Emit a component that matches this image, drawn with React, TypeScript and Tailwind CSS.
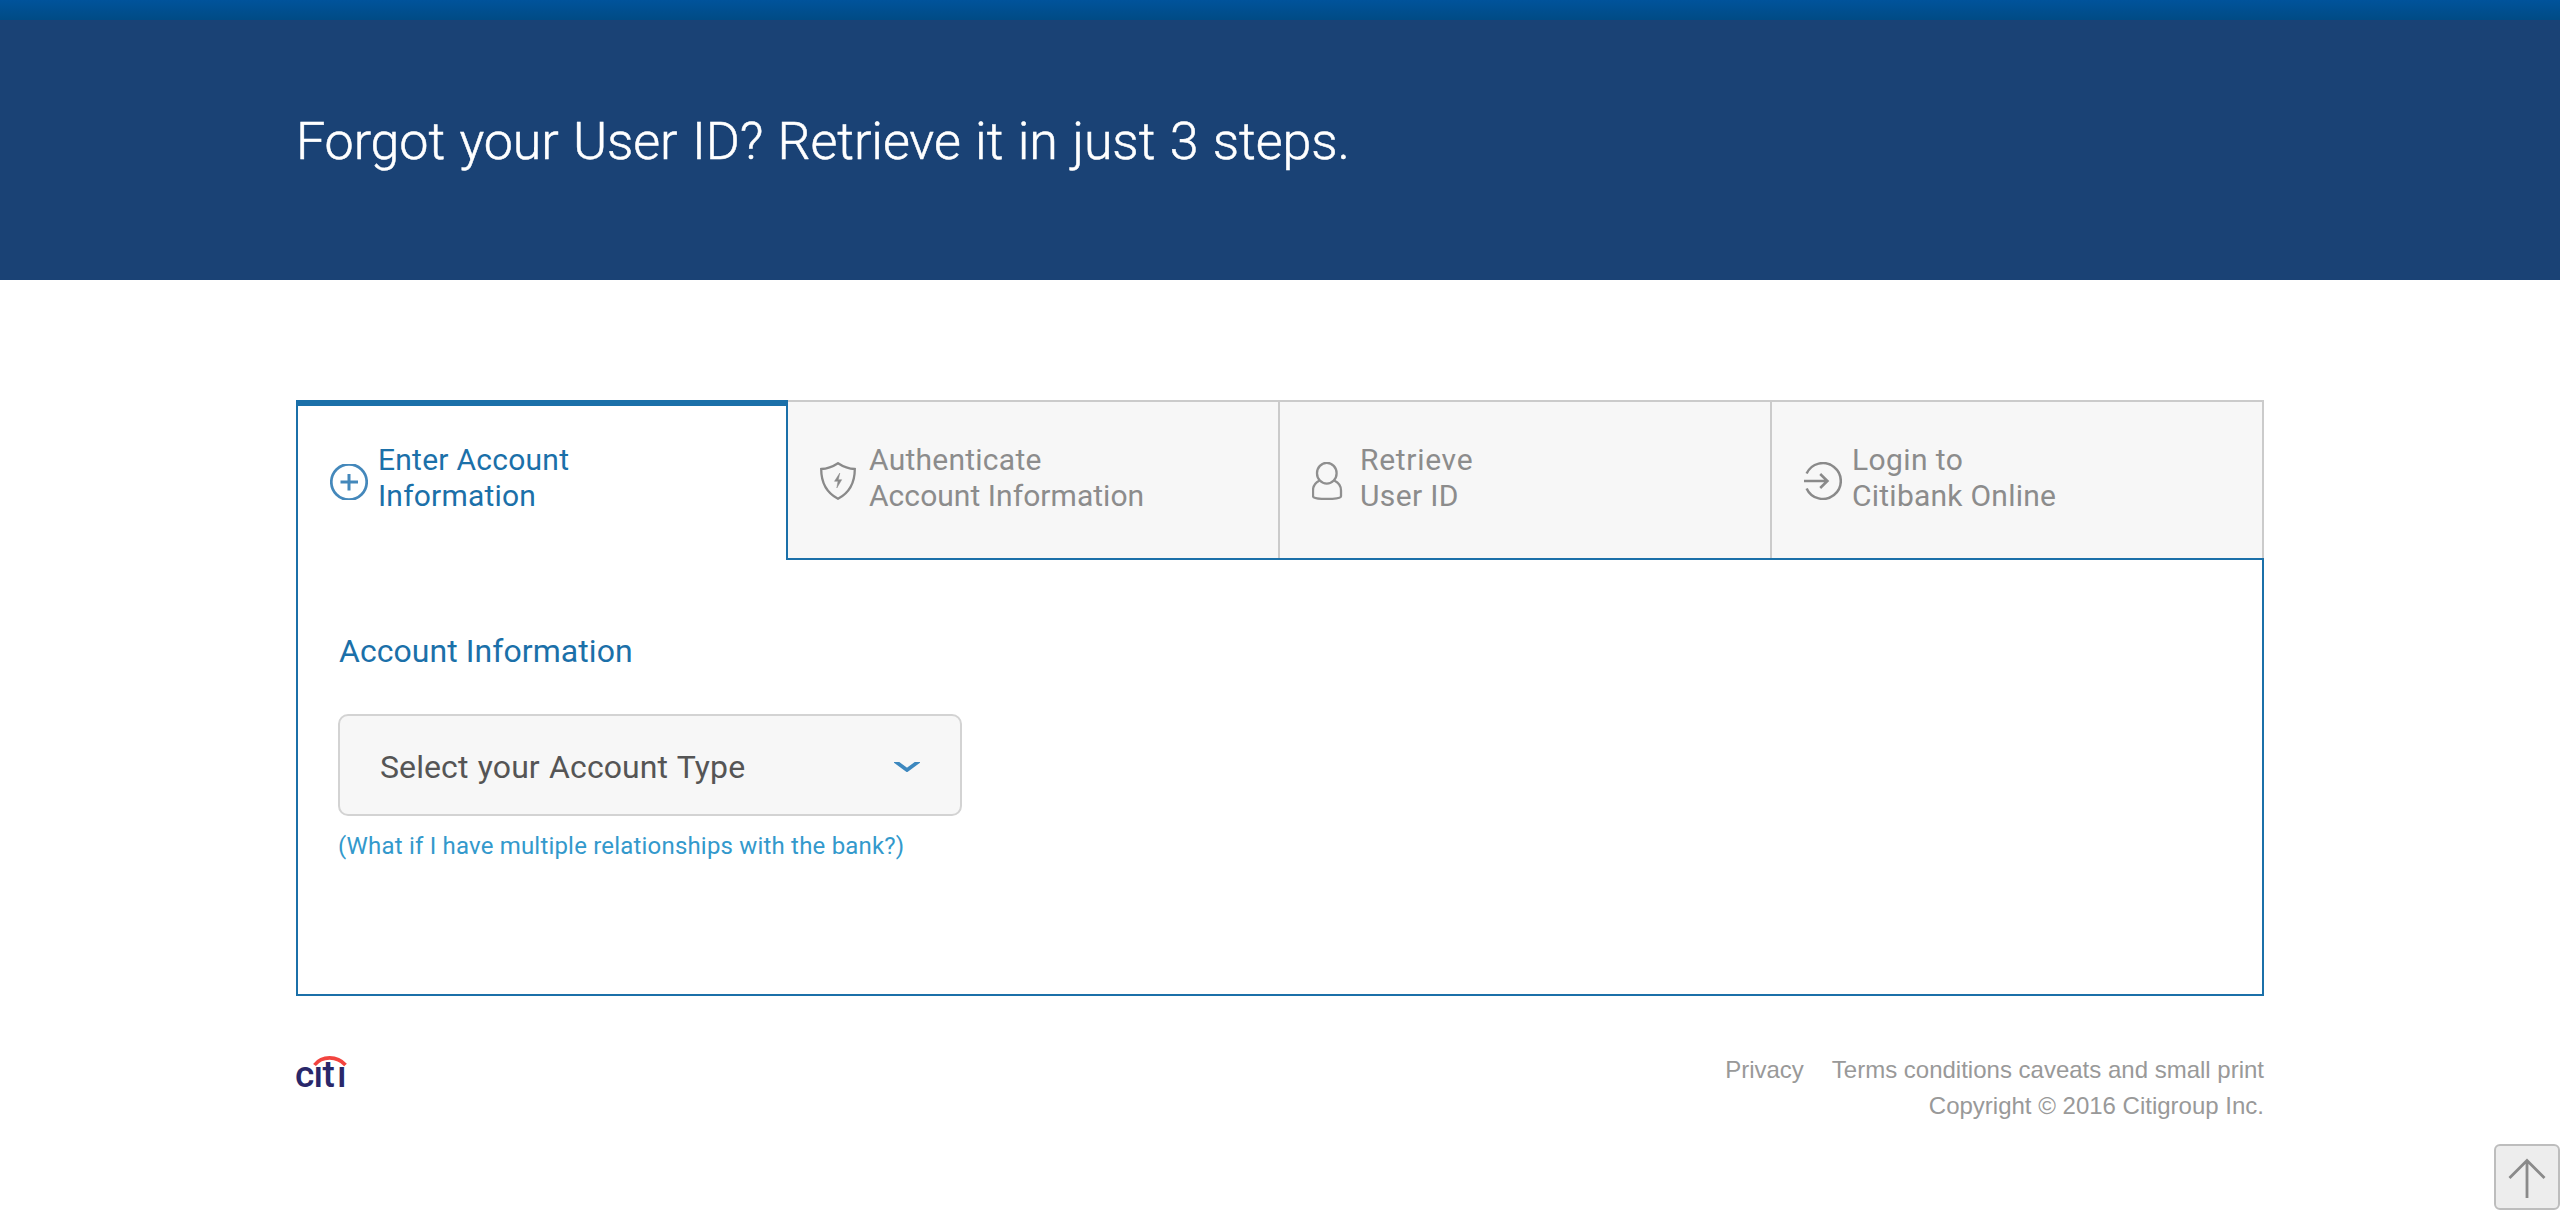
import type { ReactNode } from 'react';

function PlusIcon() {
  return (
    <svg className="mt-[22px] h-9 w-[38px] shrink-0" viewBox="0 0 38 36" fill="none" stroke="#4488bb">
      <circle cx="19" cy="18" r="17.7" strokeWidth="2.700" />
      <path d="M10.5 18h17.5M19 10v16.5" strokeWidth="3" />
    </svg>
  );
}

function ShieldIcon() {
  return (
    <svg className="mt-5 h-[38px] w-[38px] shrink-0" viewBox="0 0 38 38" fill="none" stroke="#8a8a8a">
      <path d="M1.2 7C7 6.800 13 4.500 18 1.200C23 4.500 29 6.800 34.800 7C34.800 21 29 31 18 36.800C7 31 1.200 21 1.200 7Z" strokeWidth="2.300" />
      <path d="M19.800 11L14.500 19.300H18L16.800 26L21.700 17.700H18.300Z" fill="#8a8a8a" strokeWidth="0.5" />
    </svg>
  );
}

function UserIcon() {
  return (
    <svg className="mt-5 h-[38px] w-[38px] shrink-0" viewBox="0 0 38 38" fill="none" stroke="#8f8f8f" strokeWidth="2.300">
      <ellipse cx="14.800" cy="11.200" rx="9.800" ry="10.400" />
      <path d="M7.500 18.500C3.500 20.500 1 24 1 28.500V34.200C1 36 7 37 15 37S29 36 29 34.200V28.500C29 24 26.500 20.500 22.200 18.500" />
    </svg>
  );
}

function LoginIcon() {
  return (
    <svg className="mt-5 h-[38px] w-[38px] shrink-0" viewBox="0 0 38 38" fill="none" stroke="#8a8a8a" strokeWidth="2.500">
      <path d="M2.600 11.600A17.900 17.900 0 1 1 2.600 26.400" />
      <path d="M0 19H23.500M16.200 12L23.400 19L16.200 26" strokeWidth="2.600" />
    </svg>
  );
}

function Tab({ icon, children }: { icon: ReactNode; children: ReactNode }) {
  return (
    <div className="flex h-[158px] flex-1 items-start gap-2.5 border-t-2 border-r-2 border-[#cbcbcb] bg-[#f7f7f7] pt-10 pl-8 text-[30px] leading-9 text-[#8c8c8c]">
      {icon}
      <div className="whitespace-nowrap">{children}</div>
    </div>
  );
}

export default function App() {
  return (
    <div className="h-[1210px] w-full overflow-hidden bg-white font-['Roboto',sans-serif]">
      <div className="h-5 bg-linear-to-b from-[#00539b] to-[#004b85]" />
      <header className="h-[260px] bg-[#1a4275]">
        <div className="mx-auto w-[1968px] pt-[90px]">
          <h1 className="text-[52px] leading-[64px] font-light tracking-[-0.1px] [word-spacing:1.8px] whitespace-nowrap text-white [-webkit-text-stroke:0.5px_white]">
            Forgot your User ID? Retrieve it in just 3 steps.
          </h1>
        </div>
      </header>

      <main className="mx-auto w-[1968px] pt-[120px]">
        <div className="flex items-start">
          <div className="flex h-40 w-[492px] items-start gap-2.5 border-x-2 border-t-6 border-[#1b70a9] pt-9 pl-8 text-[30px] leading-9 text-[#1b70a9]">
            <PlusIcon />
            <div className="whitespace-nowrap">
              <p className="tracking-[0.25px]">Enter Account</p>
              <p className="tracking-[0.2px]">Information</p>
            </div>
          </div>
          <div className="flex flex-1 border-b-2 border-[#1b70a9]">
            <Tab icon={<ShieldIcon />}>
              <p className="pl-px tracking-[0.25px]">Authenticate</p>
              <p className="pl-px tracking-[0.05px]">Account Information</p>
            </Tab>
            <Tab icon={<UserIcon />}>
              <p className="tracking-[0.7px]">Retrieve</p>
              <p className="tracking-[0.35px]">User ID</p>
            </Tab>
            <Tab icon={<LoginIcon />}>
              <p className="tracking-[0.4px]">Login to</p>
              <p className="tracking-[0.24px]">Citibank Online</p>
            </Tab>
          </div>
        </div>

        <section className="flex h-[436px] flex-col items-start border-x-2 border-b-2 border-[#1b70a9] pt-[71px] pl-10">
          <h2 className="pl-px text-[32px] leading-10 tracking-[0.06px] text-[#1b70a9]">Account Information</h2>
          <button className="mt-[43px] flex h-[102px] w-[624px] items-center justify-between rounded-[10px] border-2 border-[#d3d3d3] bg-[#f7f7f7] pr-10 pl-10 text-[32px] tracking-[0.1px] [word-spacing:1.2px] text-[#555]">
            <span className="pt-[3px] leading-10">Select your Account Type</span>
            <svg className="mt-1 h-2.5 w-[26px]" viewBox="0 0 26 10" fill="none">
              <path d="M0 -1.500L13 8L26 -1.500" stroke="#3d88bf" strokeWidth="3.800" />
            </svg>
          </button>
          <a className="mt-3.5 text-2xl leading-8 tracking-[0.19px] text-[#3399cc]">
            (What if I have multiple relationships with the bank?)
          </a>
        </section>
      </main>

      <footer className="mx-auto flex w-[1968px] items-start justify-between pt-14">
        <svg className="mt-1 h-8 w-[50px] overflow-visible" viewBox="0 0 50 32" aria-label="citi">
          <text x="-1 17.500 26.500 41" y="31" fill="#29276a" fontFamily="Roboto" fontWeight="500" fontSize="37">cıtı</text>
          <path d="M18.500 9C26 -0.500 41 -0.500 49.500 9" fill="none" stroke="#f2443f" strokeWidth="3.600" />
        </svg>
        <div className="text-right font-['Liberation_Sans',sans-serif] text-2xl leading-9 text-[#999]">
          <div className="flex justify-end gap-7">
            <a>Privacy</a>
            <a>Terms conditions caveats and small print</a>
          </div>
          <p>Copyright © 2016 Citigroup Inc.</p>
        </div>
      </footer>

      <button className="fixed right-0 bottom-0 flex size-[66px] items-center justify-center rounded-md border-2 border-[#bdbdbd] bg-[#ededed]">
        <svg className="h-[62px] w-[62px]" viewBox="0 0 62 62" fill="none" stroke="#8a8a8a" strokeWidth="2.800">
          <path d="M31 14V52M13.500 32L31 14.500L48.500 32" />
        </svg>
      </button>
    </div>
  );
}
